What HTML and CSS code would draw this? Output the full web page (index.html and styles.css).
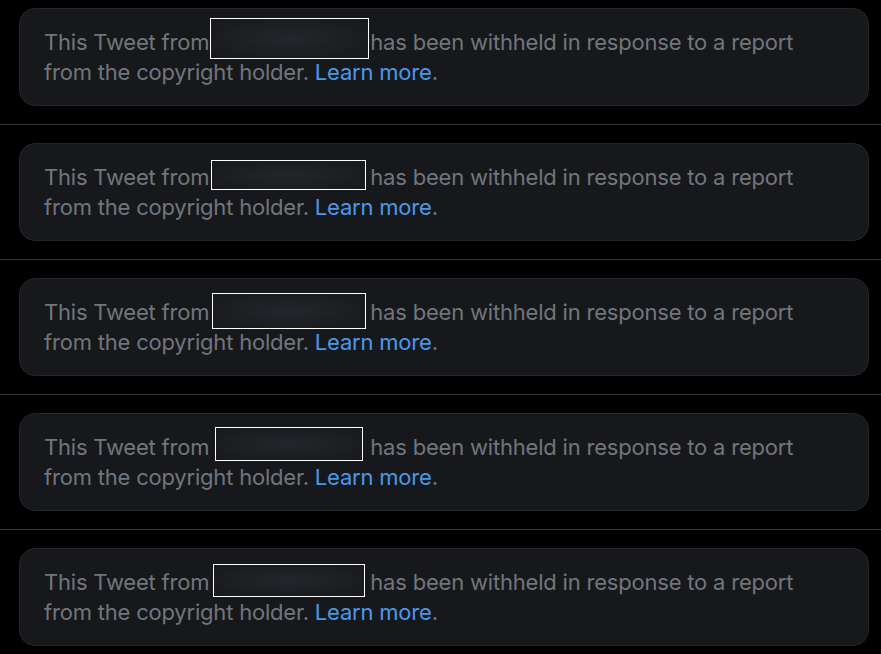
FILE: index.html
```html
<!DOCTYPE html>
<html lang="en">
<head>
<meta charset="utf-8">
<title>Withheld Tweets</title>
<link rel="stylesheet" href="styles.css">
</head>
<body>
<main class="feed">
  <article class="item">
    <div class="notice">This Tweet from <span class="user"><span class="redact r1"></span></span> has been withheld in response to a report from the copyright holder. <a class="link" href="#">Learn more</a>.</div>
  </article>
  <article class="item">
    <div class="notice">This Tweet from <span class="user"><span class="redact r2"></span></span> has been withheld in response to a report from the copyright holder. <a class="link" href="#">Learn more</a>.</div>
  </article>
  <article class="item">
    <div class="notice">This Tweet from <span class="user"><span class="redact r3"></span></span> has been withheld in response to a report from the copyright holder. <a class="link" href="#">Learn more</a>.</div>
  </article>
  <article class="item">
    <div class="notice">This Tweet from <span class="user"><span class="redact r4"></span></span> has been withheld in response to a report from the copyright holder. <a class="link" href="#">Learn more</a>.</div>
  </article>
  <article class="item">
    <div class="notice">This Tweet from <span class="user"><span class="redact r5"></span></span> has been withheld in response to a report from the copyright holder. <a class="link" href="#">Learn more</a>.</div>
  </article>
</main>
</body>
</html>
```
FILE: styles.css
```css
html, body {
  margin: 0;
  padding: 0;
  background: #000;
}

body {
  font-family: Inter, Roboto, "Liberation Sans", sans-serif;
  font-size: 22px;
  line-height: 30px;
  letter-spacing: -0.2px;
  color: #71767b;
}

.feed {
  display: flex;
  flex-direction: column;
}

.item {
  padding: 18px 12px 18px 19px;
  border-bottom: 1px solid #343538;
}

.item:first-child {
  padding-top: 8px;
}

.notice {
  width: 850px;
  box-sizing: border-box;
  padding: 18px 24px;
  background: #17181c;
  border: 1px solid #24262a;
  border-radius: 16px;
}

.link {
  color: #4a99e9;
  text-decoration: none;
}

.user {
  display: inline-block;
  position: relative;
  width: 149px;
  height: 20px;
  vertical-align: middle;
}

.redact {
  position: absolute;
  box-sizing: border-box;
  border: 1px solid #ffffff;
  background: radial-gradient(ellipse at center, #24262b 0%, #1b1c20 70%, #18191d 100%);
}

.r1 { left: -5px; top: -16px; width: 159px; height: 41px; }
.r2 { left: -4px; top: -9px; width: 155px; height: 30px; }
.r3 { left: -3px; top: -11px; width: 154px; height: 36px; }
.r4 { left: 0; top: -12px; width: 148px; height: 34px; }
.r5 { left: -2px; top: -10px; width: 152px; height: 33px; }
```
